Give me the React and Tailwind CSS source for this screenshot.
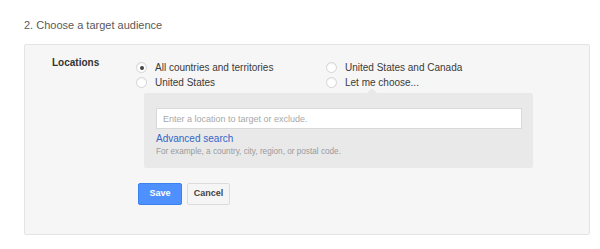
import React from 'react';

const options = [
  { label: 'All countries and territories', checked: true },
  { label: 'United States and Canada' },
  { label: 'United States' },
  { label: 'Let me choose...' },
];

function Radio({ checked }) {
  return (
    <span className="w-[11px] h-[11px] rounded-full bg-white border border-[#d4d4d4] shadow-[inset_0_1px_1px_rgba(0,0,0,0.06)] flex items-center justify-center shrink-0">
      {checked && <span className="w-[4px] h-[4px] rounded-full bg-[#444]"></span>}
    </span>
  );
}

export default function App() {
  return (
    <div className="w-[600px] h-[249px] bg-white pt-[19px] px-[24px] font-['Liberation_Sans',Arial,sans-serif]">
      <h2 className="text-[11px] leading-[13px] text-[#5a5a5a]">2. Choose a target audience</h2>

      <div className="mt-[12px] w-[566px] h-[191px] bg-[#f6f6f6] border border-[#e4e4e4] rounded-[2px] flex pl-[27px] pt-[12px]">
        <div className="w-[84px] text-[10px] leading-[12px] font-bold text-[#333]">Locations</div>

        <div className="pt-[3px]">
          {/* radio options */}
          <div className="grid grid-cols-[190px_190px]">
            {options.map((o, i) => (
              <label key={i} className="h-[15px] flex items-center gap-[8px] text-[10px] text-[#3a3a3a]">
                <Radio checked={o.checked} />
                <span>{o.label}</span>
              </label>
            ))}
          </div>

          {/* location search box */}
          <div className="relative mt-[3px] ml-[8px] w-[389px] h-[75px] bg-[#e9e9e9] rounded-[2px] pl-[12px] pt-[15px]">
            <div className="absolute -top-[5px] left-[223px] w-0 h-0 border-x-[5px] border-x-transparent border-b-[5px] border-b-[#e9e9e9]"></div>
            <input
              className="block w-[366px] h-[21px] bg-white border border-[#d9d9d9] px-[6px] text-[9px] text-[#333] placeholder:text-[#a8a8a8] outline-none"
              placeholder="Enter a location to target or exclude."
            />
            <div className="mt-[4px] text-[10px] leading-[12px] text-[#3565c8]">Advanced search</div>
            <div className="mt-[2px] text-[8.2px] leading-[10px] text-[#9a9a9a]">For example, a country, city, region, or postal code.</div>
          </div>

          {/* actions */}
          <div className="mt-[15px] ml-[2px] flex gap-[5px]">
            <button className="w-[44px] h-[22px] bg-[#4d90fe] border border-[#3b82f0] rounded-[2px] text-[9px] font-bold text-white">
              Save
            </button>
            <button className="w-[43px] h-[22px] bg-[#f5f5f5] border border-[#dcdcdc] rounded-[2px] text-[9px] font-bold text-[#444]">
              Cancel
            </button>
          </div>
        </div>
      </div>
    </div>
  );
}
